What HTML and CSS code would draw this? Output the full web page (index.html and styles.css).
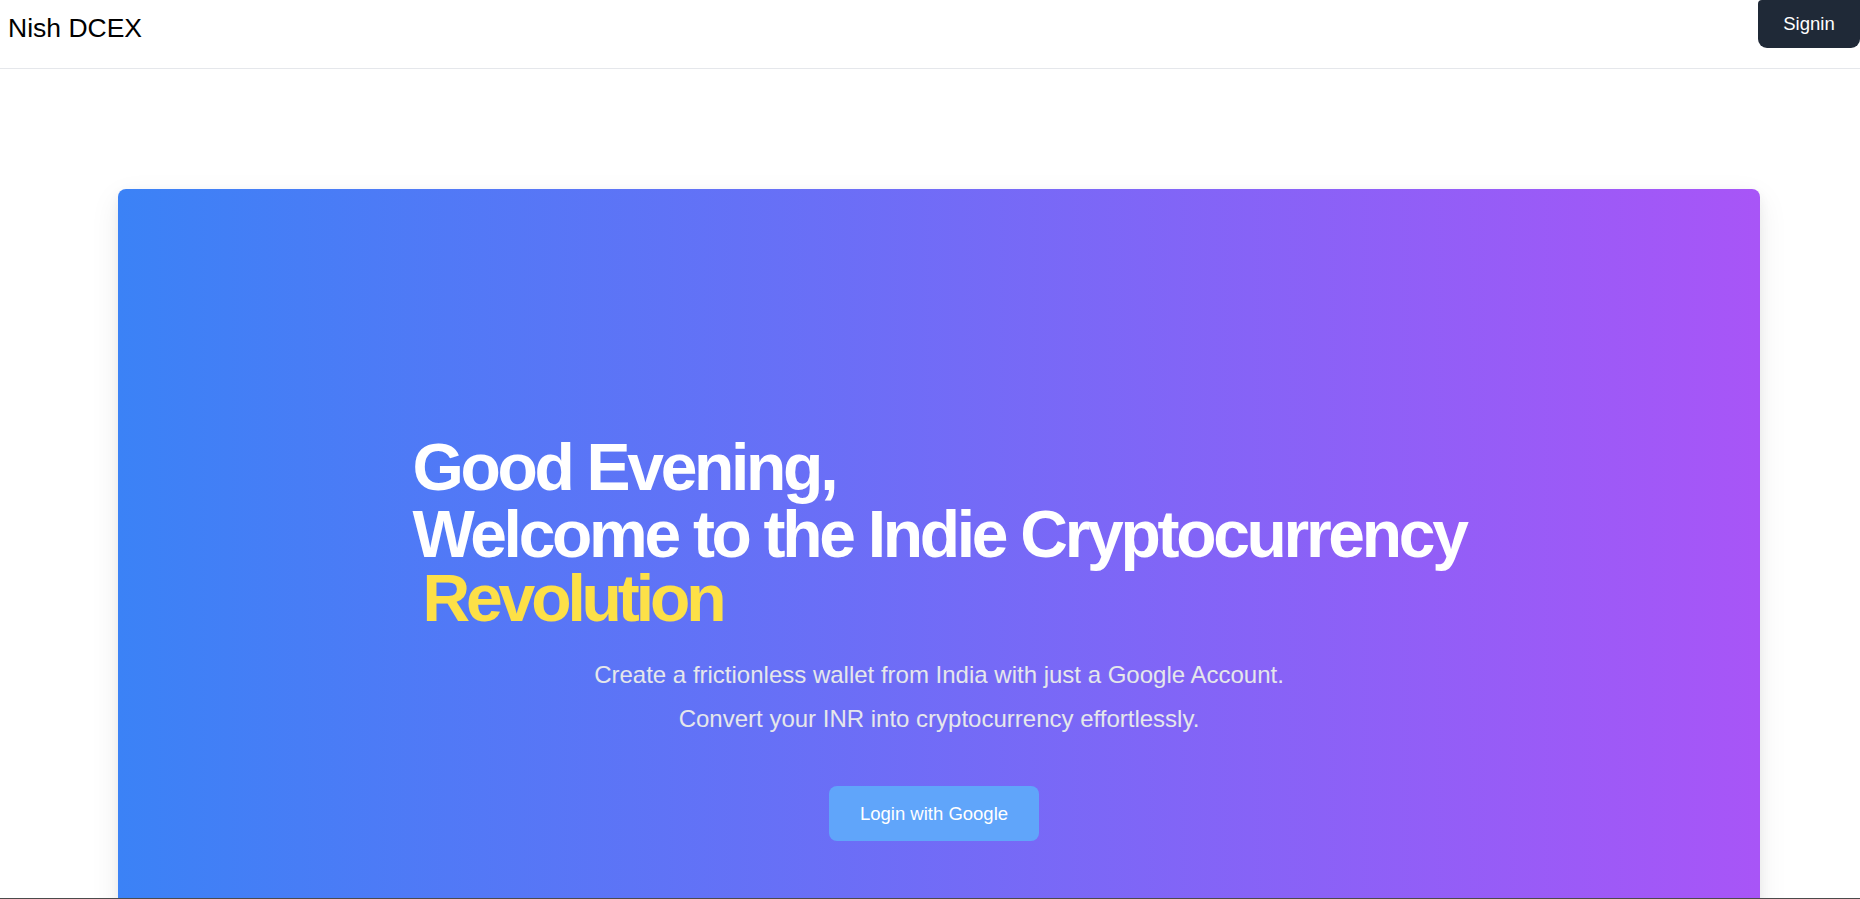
FILE: index.html
```html
<!DOCTYPE html>
<html lang="en">
<head>
<meta charset="utf-8">
<title>Nish DCEX</title>
<link rel="stylesheet" href="styles.css">
</head>
<body>
<header class="topbar">
  <div class="brand">Nish DCEX</div>
  <button class="signin">Signin</button>
</header>
<main class="main">
  <section class="hero">
    <div class="hero-inner">
      <div class="headline">
        <div class="greeting">Good Evening,</div>
        <div class="welcome">Welcome to the Indie Cryptocurrency</div>
        <div class="revolution">Revolution</div>
      </div>
      <p class="sub sub-first">Create a frictionless wallet from India with just a Google Account.</p>
      <p class="sub sub-second">Convert your INR into cryptocurrency effortlessly.</p>
      <button class="google-btn">Login with Google</button>
    </div>
  </section>
</main>
<div class="taskbar-edge"></div>
</body>
</html>
```

FILE: styles.css
```css
html, body {
  margin: 0;
  padding: 0;
  height: 100%;
  overflow: hidden;
  background: #ffffff;
}

body {
  font-family: "Liberation Sans", Arial, sans-serif;
  color: #000000;
}

.topbar {
  height: 68px;
  border-bottom: 1px solid #e5e7eb;
  display: flex;
  justify-content: space-between;
  align-items: flex-start;
  box-sizing: content-box;
}

.brand {
  font-size: 26.5px;
  line-height: 30px;
  padding: 13px 0 0 8px;
  color: #000;
}

.signin {
  background: #1f2937;
  color: #ffffff;
  border: none;
  font-family: "Liberation Sans", Arial, sans-serif;
  font-size: 18.5px;
  line-height: 28px;
  padding: 10px 24px;
  width: 102px;
  height: 48px;
  border-top-left-radius: 4px;
  border-top-right-radius: 0;
  border-bottom-left-radius: 9px;
  border-bottom-right-radius: 9px;
  margin: 0;
  cursor: pointer;
}

.main {
  padding-top: 120px;
}

.hero {
  margin-left: 118px;
  width: 1642px;
  height: 760px;
  border-radius: 8px;
  background: linear-gradient(to right, #3b82f6, #a855f7);
  box-shadow: 0 10px 30px rgba(0, 0, 0, 0.08), 0 4px 12px rgba(0, 0, 0, 0.05);
  box-sizing: border-box;
  padding-top: 245px;
}

.hero-inner {
  display: flex;
  flex-direction: column;
  align-items: center;
}

.headline {
  text-align: left;
  color: #ffffff;
  font-size: 66px;
  font-weight: 700;
  letter-spacing: -0.05em;
  line-height: 66px;
}

.greeting {
  margin-bottom: 4px;
}

.welcome {
  line-height: 61px;
}

.revolution {
  color: #fde047;
  padding-left: 10px;
  letter-spacing: -4.1px;
}

.sub {
  margin: 0;
  font-size: 24px;
  line-height: 32px;
  color: #e5e7eb;
  text-align: center;
}

.sub-first {
  margin-top: 28px;
}

.sub-second {
  margin-top: 12px;
}

.google-btn {
  margin-top: 51px;
  margin-right: 10px;
  width: 210px;
  height: 55px;
  border: none;
  border-radius: 8px;
  background: #60a5fa;
  color: #ffffff;
  font-family: "Liberation Sans", Arial, sans-serif;
  font-size: 18.5px;
  line-height: 28px;
  cursor: pointer;
}

.taskbar-edge {
  position: fixed;
  left: 0;
  right: 0;
  bottom: 0;
  height: 1px;
  background: #4b4b4b;
}
```
